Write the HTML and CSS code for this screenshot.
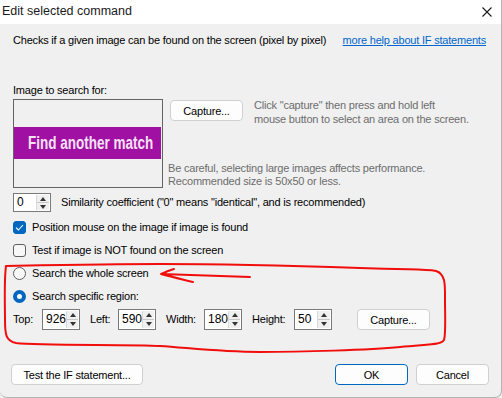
FILE: index.html
```html
<!DOCTYPE html>
<html lang="en">
<head>
  <meta charset="UTF-8" />
  <title>Edit selected command</title>
  <link rel="stylesheet" href="styles.css">
</head>
<body>
  <div class="window">
    <header class="titlebar">
      <span class="title">Edit selected command</span>
      <svg class="close-icon" width="10" height="10" viewBox="0 0 10 10">
        <path d="M0.5 0.5 L9.5 9.5 M9.5 0.5 L0.5 9.5" stroke="#1a1a1a" stroke-width="1.1" fill="none"/>
      </svg>
    </header>

    <main class="dialog">
      <div class="intro">
        <span>Checks if a given image can be found on the screen (pixel by pixel)</span>
        <a class="help-link" href="#">more help about IF statements</a>
      </div>

      <div class="section-label">Image to search for:</div>

      <div class="image-row">
        <div class="preview">
          <div class="preview-band"><span class="band-text">Find another match</span></div>
        </div>
        <div class="image-side">
          <div class="capture-row">
            <button class="btn capture-btn">Capture...</button>
            <p class="hint">Click "capture" then press and hold left<br>mouse button to select an area on the screen.</p>
          </div>
          <p class="hint warn">Be careful, selecting large images affects performance.<br>Recommended size is 50x50 or less.</p>
        </div>
      </div>

      <div class="similarity-row">
        <span class="spinner spinner-small">
          <span class="spinner-value">0</span>
          <span class="spinner-arrows"><i class="arrow-up"></i><i class="arrow-down"></i></span>
        </span>
        <span>Similarity coefficient ("0" means "identical", and is recommended)</span>
      </div>

      <div class="option"><span class="checkbox checked">
        <svg width="9" height="7" viewBox="0 0 9 7"><path d="M1 3.6 L3.4 6 L8 1" stroke="#fff" stroke-width="1.1" fill="none"/></svg>
      </span>Position mouse on the image if image is found</div>
      <div class="option"><span class="checkbox"></span>Test if image is NOT found on the screen</div>
      <div class="option"><span class="radio"></span>Search the whole screen</div>
      <div class="option"><span class="radio selected"></span>Search specific region:</div>

      <div class="region-row">
        <span class="field-label label-top">Top:</span>
        <span class="spinner">
          <span class="spinner-value">926</span>
          <span class="spinner-arrows"><i class="arrow-up"></i><i class="arrow-down"></i></span>
        </span>
        <span class="field-label label-left">Left:</span>
        <span class="spinner">
          <span class="spinner-value">590</span>
          <span class="spinner-arrows"><i class="arrow-up"></i><i class="arrow-down"></i></span>
        </span>
        <span class="field-label label-width">Width:</span>
        <span class="spinner">
          <span class="spinner-value">180</span>
          <span class="spinner-arrows"><i class="arrow-up"></i><i class="arrow-down"></i></span>
        </span>
        <span class="field-label label-height">Height:</span>
        <span class="spinner">
          <span class="spinner-value">50</span>
          <span class="spinner-arrows"><i class="arrow-up"></i><i class="arrow-down"></i></span>
        </span>
        <button class="btn region-capture">Capture...</button>
      </div>
    </main>

    <footer class="dialog-buttons">
      <button class="btn test-btn">Test the IF statement...</button>
      <div class="confirm-buttons">
        <button class="btn btn-default">OK</button>
        <button class="btn">Cancel</button>
      </div>
    </footer>

    <!-- red freehand markup drawn over the dialog -->
    <svg class="markup" width="502" height="398" viewBox="0 0 502 398">
      <path d="M6 266 C60 265 110 264 160 264 S300 266 360 268 S425 269 436 271 C446 274 445 286 445 300 S446 334 444 340 C441 345 430 344 400 347 S300 352 260 352 S190 348 160 346 S40 346 16 343 C6 341 5 335 5 320 S4 280 6 266"
            stroke="#f20d0d" stroke-width="2" fill="none" stroke-linecap="round"/>
      <path d="M250 277 C220 276 190 275 161 274 M161 274 C166 272 170 270 174 269 M161 274 C172 277 185 280 193 282"
            stroke="#f20d0d" stroke-width="2" fill="none" stroke-linecap="round"/>
    </svg>
  </div>
</body>
</html>
```

FILE: styles.css
```css
* {
  margin: 0;
  padding: 0;
  box-sizing: border-box;
}

body {
  font-family: 'Liberation Sans', Arial, sans-serif;
  font-size: 11px;
  letter-spacing: -0.2px;
  color: #000000;
  background-color: #f0f0f0;
}

.window {
  position: relative;
  width: 502px;
  height: 398px;
  display: flex;
  flex-direction: column;
  background-color: #f0f0f0;
  border-right: 1px solid #b4b4b4;
  border-bottom: 1px solid #b4b4b4;
  border-bottom-left-radius: 7px;
  border-bottom-right-radius: 7px;
  overflow: hidden;
  white-space: nowrap;
}

.titlebar {
  height: 24px;
  flex-shrink: 0;
  background-color: #ffffff;
  display: flex;
  align-items: center;
  justify-content: space-between;
  padding: 0 9px 2px 2px;
}

.title {
  font-size: 12.5px;
  letter-spacing: 0;
  color: #1a1a1a;
}

.close-icon {
  margin-top: 1px;
}

.dialog {
  flex: 1;
  padding: 0 13px;
  line-height: 15px;
}

.intro {
  margin-top: 9px;
  display: flex;
  justify-content: space-between;
  padding-right: 2px;
}

.help-link {
  color: #0066cc;
  text-decoration: underline;
}

.section-label {
  margin-top: 35px;
}

.image-row {
  display: flex;
  margin-top: 1px;
}

.preview {
  width: 150px;
  height: 89px;
  border: 1px solid #646464;
  padding-top: 27px;
  flex-shrink: 0;
}

.preview-band {
  width: 147px;
  height: 32px;
  background-color: #a010a2;
  padding-left: 14px;
  overflow: hidden;
}

.band-text {
  display: inline-block;
  color: #f6e2f6;
  font-family: 'Liberation Sans', Arial, sans-serif;
  font-weight: bold;
  font-size: 19px;
  line-height: 32px;
  letter-spacing: 0;
  transform: scaleX(0.71);
  transform-origin: left center;
}

.image-side {
  display: flex;
  flex-direction: column;
  justify-content: space-between;
  margin-left: 5px;
  height: 89px;
}

.capture-row {
  display: flex;
  align-items: flex-start;
}

.hint {
  color: #6d6d6d;
  line-height: 14px;
}

.capture-row .hint {
  margin-left: 11px;
  margin-top: -1px;
}

.hint.warn {
  line-height: 13px;
}

.btn {
  font-family: 'Liberation Sans', Arial, sans-serif;
  font-size: 11px;
  letter-spacing: -0.2px;
  height: 21px;
  background-color: #fdfdfd;
  border: 1px solid #d0d0d0;
  border-radius: 4px;
  color: #000000;
}

.capture-btn {
  width: 73px;
  margin-left: 2px;
  margin-top: 1px;
}

.similarity-row {
  display: flex;
  align-items: center;
  margin-top: 5px;
  gap: 10px;
}

.spinner {
  display: flex;
  width: 38px;
  height: 21px;
  border: 1px solid #7a7a7a;
  background-color: #ffffff;
  padding: 1px;
}

.spinner-small {
  height: 19px;
}

.spinner-value {
  flex: 1;
  padding-left: 2px;
  font-size: 12px;
  letter-spacing: 0;
  line-height: 17px;
}

.spinner-small .spinner-value {
  line-height: 15px;
}

.spinner-arrows {
  width: 13px;
  display: flex;
  flex-direction: column;
  background-color: #f0f0f0;
  border-left: 1px solid #dadada;
}

.spinner-arrows i {
  flex: 1;
  display: flex;
  align-items: center;
  justify-content: center;
}

.arrow-up::after {
  content: '';
  border-left: 3px solid transparent;
  border-right: 3px solid transparent;
  border-bottom: 4px solid #333;
}

.arrow-down {
  border-top: 1px solid #c8c8c8;
}

.arrow-down::after {
  content: '';
  border-left: 3px solid transparent;
  border-right: 3px solid transparent;
  border-top: 4px solid #333;
}

.option {
  height: 23px;
  display: flex;
  align-items: center;
  gap: 6px;
}

.similarity-row + .option {
  margin-top: 4px;
}

.checkbox {
  width: 13px;
  height: 13px;
  border: 1px solid #5f5f5f;
  border-radius: 3px;
  background-color: #f7f7f7;
  display: flex;
  align-items: center;
  justify-content: center;
}

.checkbox.checked {
  background-color: #0067c0;
  border-color: #0067c0;
}

.radio {
  width: 13px;
  height: 13px;
  border: 1px solid #5f5f5f;
  border-radius: 50%;
  background-color: #f7f7f7;
}

.radio.selected {
  border: 4px solid #0067c0;
  background-color: #ffffff;
}

.region-row {
  display: flex;
  align-items: center;
  height: 23px;
}

.label-top { width: 29px; }
.label-left { width: 28px; margin-left: 10px; }
.label-width { width: 38px; margin-left: 10px; }
.label-height { width: 42px; margin-left: 10px; }

.region-capture {
  width: 73px;
  margin-left: 25px;
}

.dialog-buttons {
  display: flex;
  justify-content: space-between;
  padding: 0 12px 12px 11px;
}

.test-btn {
  width: 132px;
}

.confirm-buttons {
  display: flex;
  gap: 8px;
}

.confirm-buttons .btn {
  width: 73px;
}

.btn-default {
  border-color: #0067c0;
}

.markup {
  position: absolute;
  top: 0;
  left: 0;
  pointer-events: none;
}
```
